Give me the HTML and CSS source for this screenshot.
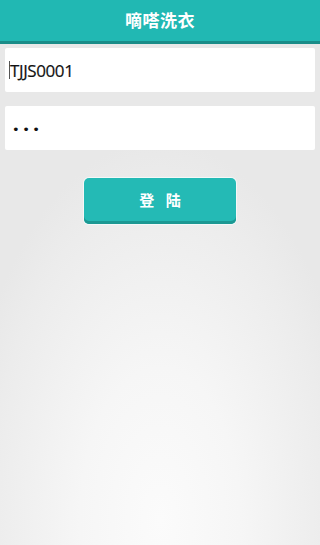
FILE: index.html
```html
<!DOCTYPE html>
<html lang="zh">
<head>
<meta charset="utf-8">
<title>嘀嗒洗衣</title>
<link rel="stylesheet" href="styles.css">
</head>
<body>
<div class="page">
  <header class="topbar"><h1 class="title">嘀嗒洗衣</h1></header>
  <main class="form">
    <div class="field"><span class="caret"></span><span class="value">TJJS0001</span></div>
    <div class="field"><span class="dots">•••</span></div>
    <div class="actions"><button class="btn">登 陆</button></div>
  </main>
</div>
</body>
</html>
```
FILE: styles.css
```css
* { box-sizing: border-box; }
html, body { margin: 0; padding: 0; }
body {
  width: 320px;
  height: 545px;
  overflow: hidden;
  font-family: "Open Sans", "Noto Sans", "Noto Sans CJK SC", sans-serif;
}
.page {
  height: 545px;
  background: radial-gradient(ellipse 200px 380px at 160px 520px, #fbfbfb 0%, #f6f6f6 40%, #ececec 85%, #e8e8e8 100%);
  background-color: #e8e8e8;
}
.topbar {
  height: 44px;
  background: #21b8b3;
  border-bottom: 3px solid #1a8c88;
  display: flex;
  align-items: center;
  justify-content: center;
}
.title {
  margin: 0;
  color: #fff;
  font-family: "Noto Sans CJK SC", sans-serif;
  font-size: 17px;
  font-weight: 700;
  letter-spacing: 0.5px;
  padding-bottom: 2px;
}
.form {
  padding: 4px 5px 0 5px;
  display: flex;
  flex-direction: column;
  gap: 14px;
}
.field {
  height: 44px;
  background: #fff;
  border-radius: 2px;
  display: flex;
  align-items: center;
  padding-left: 4px;
}
.caret {
  width: 1px;
  height: 18px;
  background: #555;
}
.value {
  font-size: 17px;
  color: #111;
  letter-spacing: -0.4px;
  padding-top: 1px;
  font-weight: 500;
  -webkit-text-stroke: 0.2px #111;
}
.dots {
  font-size: 13px;
  color: #111;
  letter-spacing: 2.5px;
  padding-left: 3px;
  padding-top: 2px;
  font-family: "DejaVu Sans", sans-serif;
}
.actions {
  display: flex;
  justify-content: center;
  padding-top: 14px;
}
.btn {
  width: 152px;
  height: 46px;
  border: none;
  border-radius: 5px;
  background: #24bab5;
  box-shadow: inset 0 -3px 0 #1c9893, 0 0 0 1px #f4f8f8;
  color: #fff;
  font-family: "Noto Sans CJK SC", sans-serif;
  font-size: 15px;
  font-weight: 700;
  letter-spacing: 4px;
  padding: 0 0 3px 4px;
}
```
